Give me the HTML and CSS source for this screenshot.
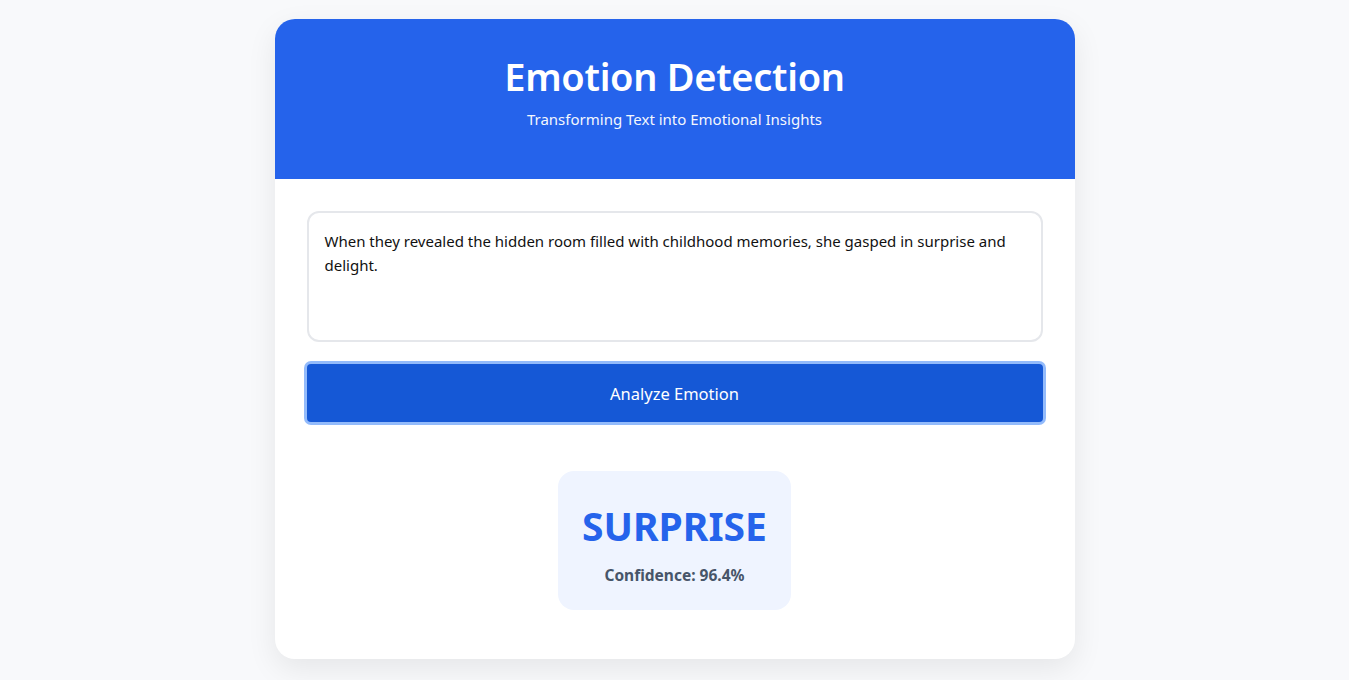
FILE: index.html
```html
<!DOCTYPE html>
<html lang="en">
<head>
<meta charset="utf-8">
<title>Emotion Detection</title>
<link rel="stylesheet" href="styles.css">
</head>
<body>
<div class="card">
  <header class="card-header">
    <h1 class="title">Emotion Detection</h1>
    <p class="subtitle">Transforming Text into Emotional Insights</p>
  </header>
  <main class="card-body">
    <textarea class="input">When they revealed the hidden room filled with childhood memories, she gasped in surprise and delight.</textarea>
    <button class="analyze">Analyze Emotion</button>
    <div class="result-wrap">
      <div class="result">
        <div class="emotion">SURPRISE</div>
        <div class="confidence">Confidence: 96.4%</div>
      </div>
    </div>
  </main>
</div>
</body>
</html>
```

FILE: styles.css
```css
* { box-sizing: border-box; }
html, body { margin: 0; padding: 0; }
body {
  background: #f8f9fb;
  font-family: "Noto Sans", "Open Sans", "Liberation Sans", sans-serif;
  height: 680px;
  overflow: hidden;
  padding-top: 19px;
}
.card {
  width: 800px;
  height: 640px;
  margin: 0 auto;
  background: #fff;
  border-radius: 20px;
  overflow: hidden;
  box-shadow: 0 10px 30px rgba(0, 0, 0, 0.08);
}
.card-header {
  background: #2563eb;
  height: 160px;
  text-align: center;
  color: #fff;
  padding-top: 31px;
}
.title {
  margin: 0;
  font-size: 38px;
  letter-spacing: -0.3px;
  font-weight: 600;
  line-height: 52px;
}
.subtitle {
  margin: 7px 0 0;
  font-size: 15px;
  line-height: 20px;
  opacity: 0.95;
}
.card-body {
  padding: 32px;
  display: flex;
  flex-direction: column;
}
.input {
  display: block;
  width: 736px;
  height: 131px;
  border: 2px solid #e5e7eb;
  border-radius: 12px;
  padding: 16px;
  font-family: inherit;
  font-size: 15px;
  line-height: 24px;
  color: #111;
  resize: none;
  outline: none;
  margin: 0;
}
.analyze {
  margin-top: 22px;
  height: 58px;
  width: 736px;
  border: none;
  border-radius: 4px;
  background: #1558d6;
  color: #fff;
  font-family: inherit;
  font-size: 16.5px;
  box-shadow: 0 0 0 3px #93bbfb;
}
.result-wrap {
  display: flex;
  justify-content: center;
  margin-top: 49px;
}
.result {
  width: 233px;
  height: 139px;
  background: #eff4ff;
  border-radius: 16px;
  text-align: center;
  padding-top: 30px;
}
.emotion {
  font-size: 39px;
  font-weight: 700;
  color: #2563eb;
  line-height: 50px;
}
.confidence {
  margin-top: 14px;
  font-size: 15.5px;
  font-weight: 700;
  color: #475569;
  line-height: 20px;
}
```
